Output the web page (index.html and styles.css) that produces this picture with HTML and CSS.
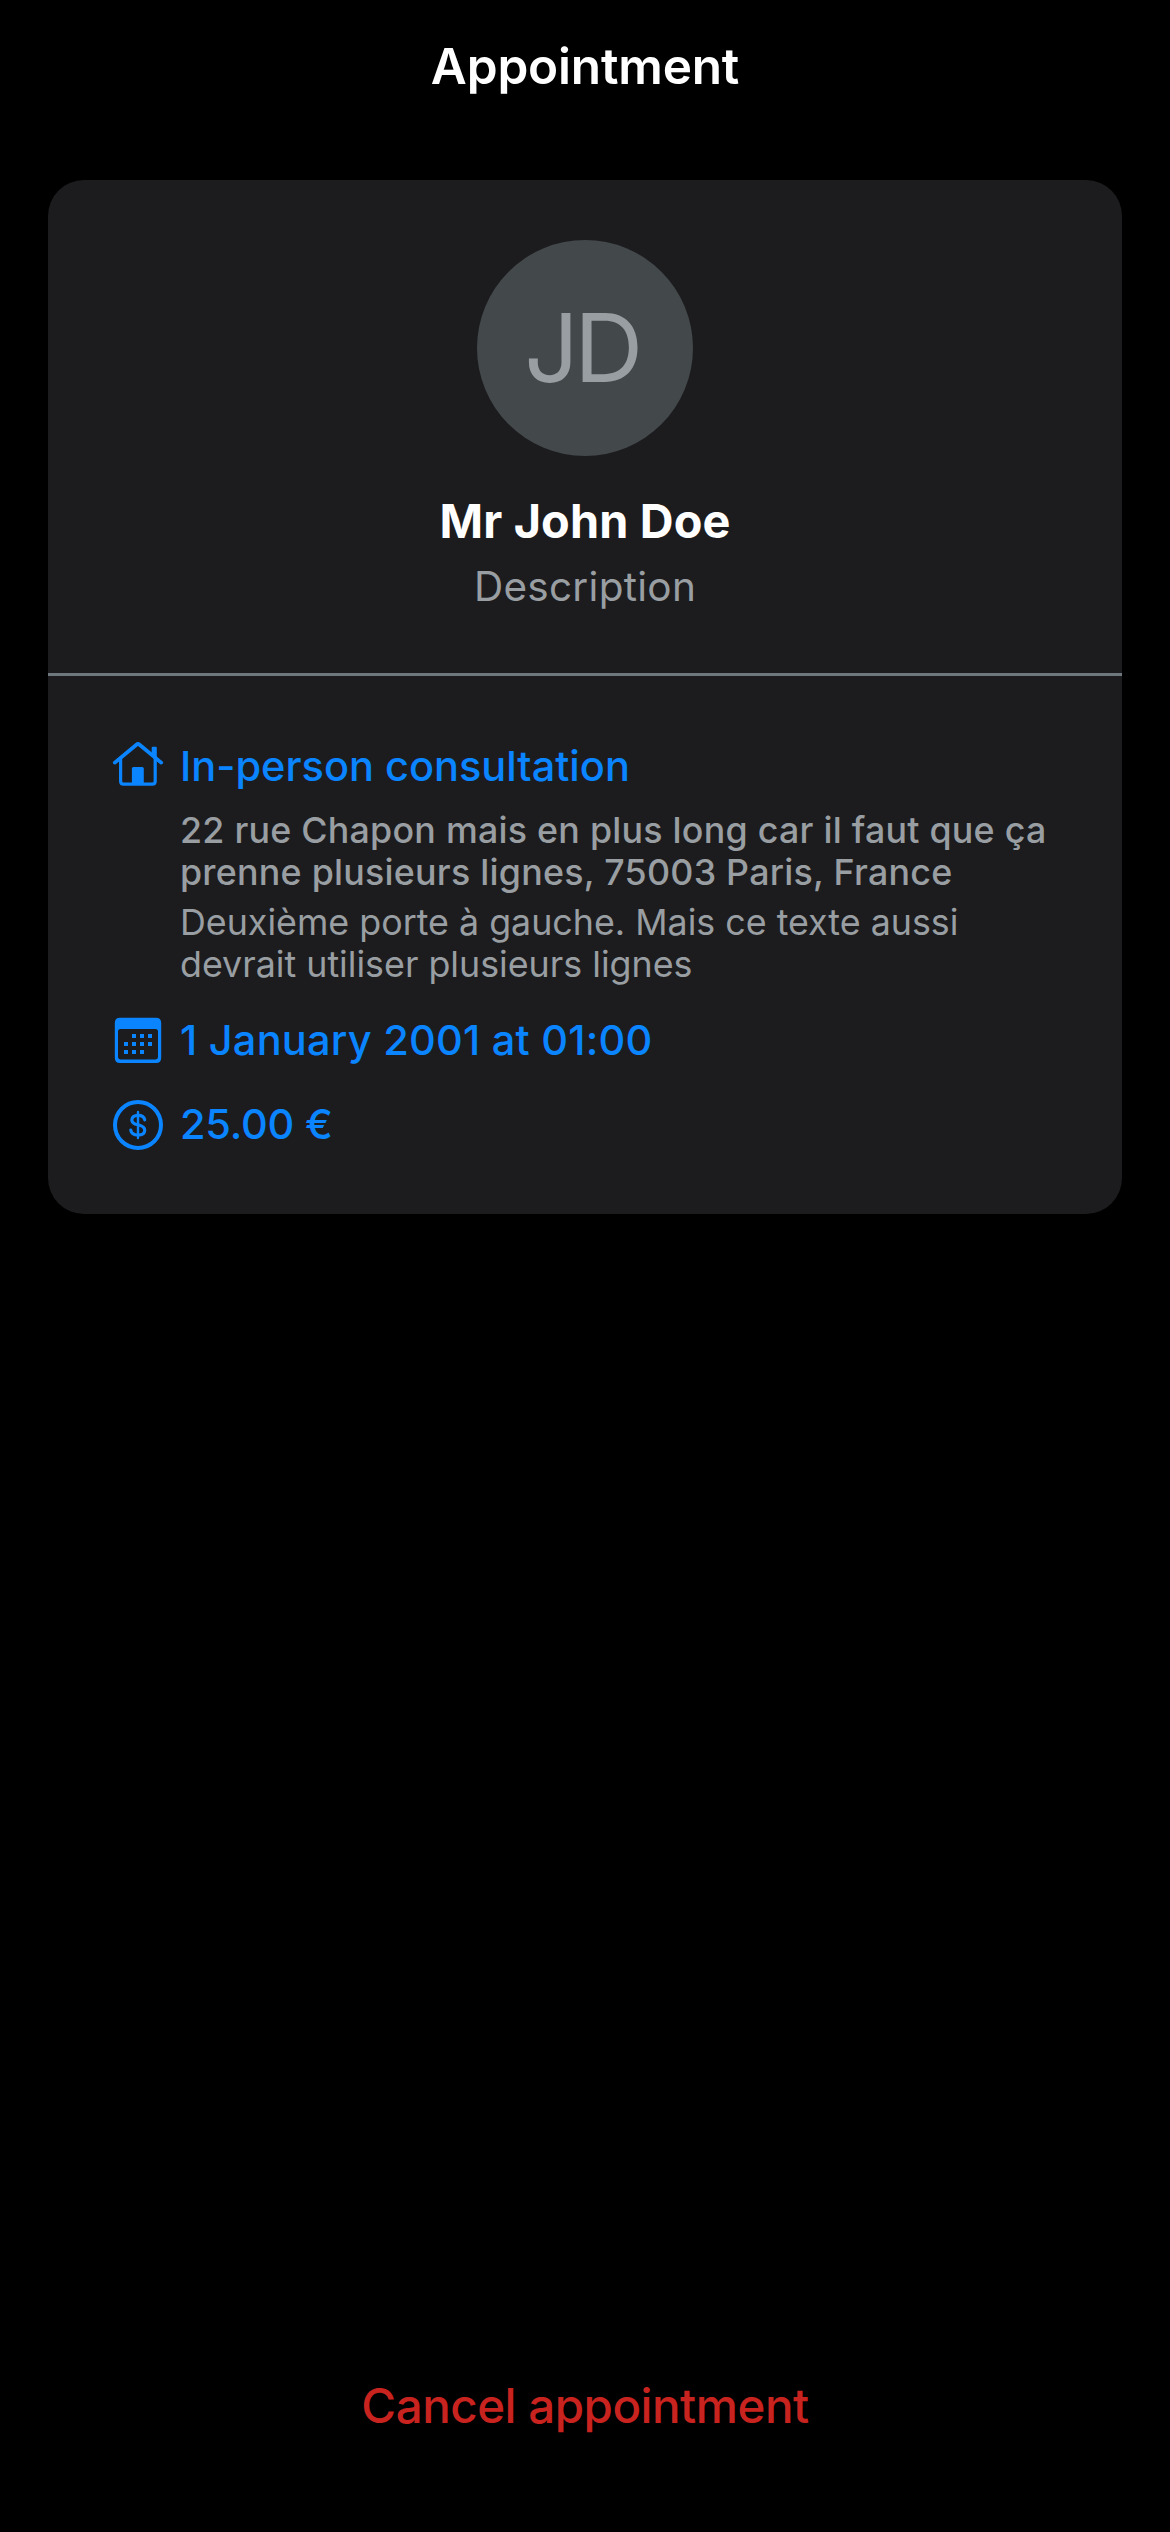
FILE: index.html
```html
<!DOCTYPE html>
<html lang="en">
<head>
<meta charset="utf-8">
<title>Appointment</title>
<link rel="stylesheet" href="styles.css">
</head>
<body>
<header class="navbar">
  <h1 class="navbar-title">Appointment</h1>
</header>
<main class="content">
  <article class="card">
    <section class="profile">
      <div class="avatar">JD</div>
      <h2 class="name">Mr John Doe</h2>
      <p class="role">Description</p>
    </section>
    <section class="details">
      <div class="row">
        <svg class="icon" viewBox="0 0 50 50" fill="none" stroke="currentColor">
          <path d="M1.8 21.6 23.4 3.7Q25 2.4 26.6 3.7L48.2 21.6" stroke-width="3.8" stroke-linecap="round"/>
          <path d="M7.6 17V40.2Q7.6 43.2 10.6 43.2H39.2Q42.2 43.2 42.2 40.2V17" stroke-width="3.2"/>
          <path d="M18.9 43.3V27.5Q18.9 26 20.4 26H29.3Q30.8 26 30.8 27.5V43.3ZM38.7 14.5V6.7Q38.7 5.7 39.7 5.7H42.8Q43.8 5.7 43.8 6.7V18.5Z" fill="currentColor" stroke="none"/>
        </svg>
        <h3 class="label">In-person consultation</h3>
      </div>
      <div class="place">
        <p class="address"><span>22 rue Chapon mais en plus long car il faut que ça</span> <span>prenne plusieurs lignes, 75003 Paris, France</span></p>
        <p class="note">Deuxième porte à gauche. Mais ce texte aussi devrait utiliser plusieurs lignes</p>
      </div>
      <div class="row row-date">
        <svg class="icon" viewBox="0 0 50 50" fill="currentColor">
          <path fill-rule="evenodd" d="M7 2.8H43Q48.2 2.8 48.2 8V42.8Q48.2 48 43 48H7Q1.8 48 1.8 42.8V8Q1.8 2.8 7 2.8ZM7.5 14Q5 14 5 16.5V42Q5 44.4 7.5 44.4H42.5Q45 44.4 45 42V16.5Q45 14 42.5 14Z"/>
          <path d="M19 19h4v4h-4zM27 19h4v4h-4zM35 19h4v4h-4zM11 27h4v4h-4zM19 27h4v4h-4zM27 27h4v4h-4zM35 27h4v4h-4zM11 35h4v4h-4zM19 35h4v4h-4zM27 35h4v4h-4z"/>
        </svg>
        <h3 class="label date">1 January 2001 at 01:00</h3>
      </div>
      <div class="row row-price">
        <svg class="icon" viewBox="0 0 50 50" fill="none" stroke="currentColor">
          <circle cx="25" cy="26" r="23" stroke-width="4"/>
          <path d="M31.7 20.8C31.2 17.9 28.8 16.3 25 16.3C21.2 16.3 18.8 18.2 18.8 20.9C18.8 23.6 20.8 24.8 25 25.8C29.6 26.9 31.7 28.2 31.7 31.2C31.7 34.2 29.2 36 25 36C20.9 36 18.3 34.2 17.8 31.2" stroke-width="3.2" stroke-linecap="round"/>
          <path d="M25 13V39" stroke-width="2.4" stroke-linecap="round"/>
        </svg>
        <h3 class="label price">25.00 €</h3>
      </div>
    </section>
  </article>
</main>
<footer class="actions">
  <button class="cancel" type="button">Cancel appointment</button>
</footer>
</body>
</html>
```
FILE: styles.css
```css
* {
  box-sizing: border-box;
  margin: 0;
}

body {
  display: flex;
  flex-direction: column;
  min-height: 2532px;
  background: #000;
  font-family: Inter, "Liberation Sans", sans-serif;
}

.navbar {
  text-align: center;
}

.navbar-title {
  font-size: 49.5px;
  font-weight: 600;
  line-height: 132px;
  letter-spacing: -0.177px;
  color: #fff;
}

.content {
  flex: 1;
  padding: 48px 48px 0;
}

.card {
  border-radius: 36px;
  background: #1c1c1e;
}

.profile {
  display: flex;
  flex-direction: column;
  align-items: center;
  padding: 60px 0 61px;
  border-bottom: 3px solid #6f777e;
}

.avatar {
  width: 216px;
  height: 216px;
  padding-right: 7px;
  border-radius: 50%;
  background: #43484b;
  color: #999ea2;
  font-size: 95.5px;
  line-height: 214px;
  letter-spacing: -4.5px;
  text-align: center;
}

.name {
  margin-top: 35px;
  font-size: 46.8px;
  font-weight: 700;
  line-height: 60px;
  letter-spacing: 0.137px;
  color: #fff;
}

.role {
  margin-top: 11px;
  font-size: 40.5px;
  line-height: 50px;
  letter-spacing: 0.282px;
  color: #999ea2;
}

.details {
  padding: 62px 65px;
}

.row {
  display: flex;
  align-items: center;
  gap: 17px;
  height: 56px;
  color: #0a84ff;
}

.row-date {
  margin-top: 27px;
}

.row-price {
  margin-top: 28px;
}

.icon {
  flex: none;
  width: 50px;
  height: 50px;
  overflow: visible;
}

.label {
  font-size: 41.5px;
  font-weight: 500;
  line-height: 56px;
}

.date {
  letter-spacing: 0.23px;
}

.price {
  letter-spacing: -0.214px;
}

.place {
  display: grid;
  gap: 8px;
  margin-top: 15px;
  padding-left: 67px;
  font-size: 35.8px;
  line-height: 42px;
  color: #999ea2;
}

.address {
  font-weight: 500;
  letter-spacing: 0.24px;
}

.address span {
  white-space: nowrap;
}

.note {
  letter-spacing: 0;
}

.actions {
  padding-bottom: 66px;
  text-align: center;
}

.cancel {
  padding: 0;
  border: 0;
  background: none;
  color: #c8231f;
  font: 500 47.5px/120px Inter, "Liberation Sans", sans-serif;
  letter-spacing: -0.5px;
}
```
